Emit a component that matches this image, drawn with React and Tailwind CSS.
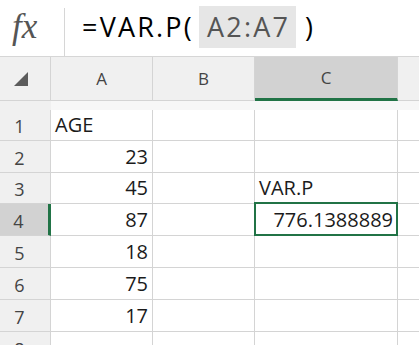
const cols = [
  { key: "A", width: "w-[102px]" },
  { key: "B", width: "w-[102px]" },
  { key: "C", width: "w-[143px]" },
];

const rows = [
  { n: 1, h: "h-[31px]", A: "AGE", C: "" },
  { n: 2, h: "h-[32px]", A: "23", C: "" },
  { n: 3, h: "h-[31px]", A: "45", C: "VAR.P" },
  { n: 4, h: "h-[32px]", A: "87", C: "776.1388889", active: true },
  { n: 5, h: "h-[32px]", A: "18", C: "" },
  { n: 6, h: "h-[32px]", A: "75", C: "" },
  { n: 7, h: "h-[32px]", A: "17", C: "" },
  { n: 8, h: "h-[32px]", A: "", C: "" },
];

function isNumber(v) {
  return /^[0-9.]+$/.test(v);
}

export default function App() {
  return (
    <div
      className="h-[345px] w-[419px] overflow-hidden bg-white text-[#1b1b1b]"
      style={{ fontFamily: "'Open Sans', 'Noto Sans', sans-serif" }}
    >
      {/* formula bar */}
      <div className="flex h-[57px] items-stretch border-b border-[#d6d6d6]">
        <div className="flex w-[64px] items-center pl-[12px] pb-[3px]">
          <span
            className="text-[35px] italic leading-none text-[#555]"
            style={{ fontFamily: "'Liberation Serif', serif" }}
          >
            fx
          </span>
        </div>
        <div className="mt-[8px] w-px bg-[#d6d6d6]" />
        <div className="flex items-center pl-[17px] pb-[3px] text-[27px] leading-none tracking-[2.2px] text-black">
          <span>=VAR.P(</span>
          <span className="ml-[5px] flex h-[42px] items-center bg-[#e6e6e6] pl-[8px] pr-[6px] text-[#555]">
            A2:A7
          </span>
          <span className="ml-[9px]">)</span>
        </div>
      </div>

      {/* column headers */}
      <div className="flex h-[44px] bg-[#f0f0f0] text-[17px] text-[#444]">
        <div className="flex w-[51px] items-center justify-center border-r border-b border-[#d4d4d4] pr-[8px]">
          <div className="h-0 w-0 border-b-[14px] border-l-[14px] border-b-[#5c5c5c] border-l-transparent" />
        </div>
        {cols.map((c) =>
          c.key === "C" ? (
            <div
              key={c.key}
              className={`${c.width} flex items-center justify-center border-b-[3px] border-r border-r-[#d4d4d4] border-b-[#217346] bg-[#d2d2d2] pt-[1px]`}
            >
              {c.key}
            </div>
          ) : (
            <div
              key={c.key}
              className={`${c.width} flex items-center justify-center border-r border-b border-[#d4d4d4]`}
            >
              {c.key}
            </div>
          )
        )}
        <div className="flex-1 border-b border-[#d4d4d4]" />
      </div>

      {/* frozen gap */}
      <div className="flex h-[9px]">
        <div className="w-[51px] bg-[#f0f0f0]" />
        <div className="flex-1 bg-[#f7f7f7]" />
      </div>

      {/* rows */}
      {rows.map((r) => (
        <div key={r.n} className={`flex ${r.h} text-[20px] leading-none`}>
          <div
            className={`flex w-[51px] items-center justify-center pr-[11px] pt-[2px] text-[18px] text-[#444] ${
              r.active
                ? "border-r-[3px] border-r-[#217346] bg-[#d2d2d2]"
                : "border-r border-r-[#d4d4d4] bg-[#f0f0f0]"
            } border-b border-b-[#d4d4d4]`}
          >
            {r.n}
          </div>
          {cols.map((c) => {
            const v = r[c.key] || "";
            const right = isNumber(v);
            return (
              <div
                key={c.key}
                className={`relative ${c.width} flex items-end border-r border-b border-[#d4d4d4] pb-[5px] ${
                  right ? "justify-end pr-[4px]" : "justify-start pl-[4px]"
                }`}
              >
                {v}
                {r.active && c.key === "C" && (
                  <div className="absolute -top-[2px] -left-px -right-px -bottom-px border-2 border-[#217346]" />
                )}
              </div>
            );
          })}
          <div className="flex-1 border-b border-[#d4d4d4]" />
        </div>
      ))}
    </div>
  );
}
